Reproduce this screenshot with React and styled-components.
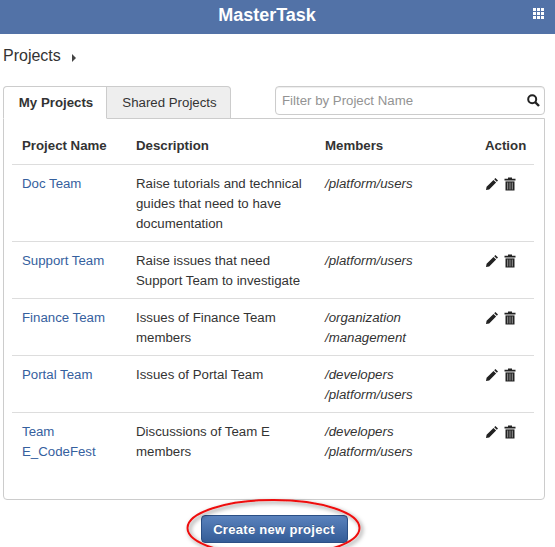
import React from "react";
import styled, { createGlobalStyle } from "styled-components";

const Global = createGlobalStyle`
  html, body { margin: 0; padding: 0; background: #fff; height: 547px; overflow: hidden; }
  * { box-sizing: border-box; }
  body { font-family: "Liberation Sans", Arial, sans-serif; font-size: 13.25px; color: #333; }
`;
const Header = styled.header`
  height: 34px; background: #5272a7; position: relative;
  display: flex; align-items: center; justify-content: center;
`;
const Title = styled.h1`
  margin: 0 21px 0 0; font-size: 18px; font-weight: 700; color: #fff; line-height: 30px; height: 34px; padding-top: 0;
`;
const GridIcon = styled.svg`
  position: absolute; right: 11px; top: 8px; width: 11px; height: 11px;
`;
const Crumb = styled.div`
  display: flex; align-items: center; height: 44px; padding: 0 0 0 3px; font-size: 16px; color: #333;
`;
const Caret = styled.span`
  width: 0; height: 0; margin: 3px 0 0 11px;
  border-left: 4px solid #444; border-top: 4px solid transparent; border-bottom: 4px solid transparent;
`;
const TopRow = styled.div`
  display: flex; justify-content: space-between; align-items: flex-start;
  margin: 8px 10px 0 3px; height: 32px;
`;
const Tabs = styled.div`
  display: flex; height: 33px; position: relative; z-index: 1;
`;
const Tab = styled.div`
  height: 33px; display: flex; align-items: center; justify-content: center; font-size: 13.25px;
  padding: 0 0 1px 2px;
  width: ${p => p.$w}px;
  border: 1px solid #ccc; border-radius: ${p => p.$first ? "4px 0 0 0" : "0 4px 0 0"};
  background: ${p => p.$active ? "#fff" : "#eee"};
  font-weight: ${p => p.$active ? 700 : 400};
  border-left-width: ${p => p.$first ? 1 : 0}px;
  border-bottom-color: ${p => p.$active ? "#fff" : "#ccc"};
`;
const Filter = styled.div`
  width: 270px; height: 29px; border: 1px solid #ccc; border-radius: 4px; background: #fff;
  display: flex; align-items: center; justify-content: space-between; padding: 0 4px 1px 6px;
  color: #939393; font-size: 13.25px; box-shadow: inset 0 1px 1px rgba(0,0,0,.075);
`;
const Panel = styled.div`
  margin: 0 10px 0 3px; height: 382px; border: 1px solid #ccc; border-radius: 0 0 4px 4px; padding: 11px 10px 0 8px;
`;
const Table = styled.div`display: flex; flex-direction: column;`;
const Row = styled.div`
  display: grid; grid-template-columns: 114px 189px 160px 1fr;
  border-top: ${p => p.$head ? "none" : "1px solid #ddd"};
  padding: ${p => p.$head ? "0 10px" : "9px 10px 0"};
  height: ${p => p.$h}px;
  line-height: 20px;
  align-items: ${p => p.$head ? "center" : "start"};
`;
const HeadCell = styled.div`
  font-weight: 700; color: #333; padding-bottom: 2px;
`;
const NameLink = styled.a`color: #35609e; text-decoration: none;`;
const Desc = styled.div`color: #333; white-space: nowrap;`;
const Members = styled.div`font-style: italic; color: #333;`;
const Actions = styled.div`display: flex; gap: 5px; padding: 3px 0 0 0;`;
const Footer = styled.div`display: flex; justify-content: center; padding-top: 15px; padding-right: 7px; position: relative;`;
const Button = styled.button`
  width: 147px; height: 28px; border: 1px solid #2b4f85; border-radius: 4px; color: #fff;
  background: linear-gradient(#5a82bd, #345c97);
  font: 700 13px "Liberation Sans", Arial, sans-serif; letter-spacing: .3px;
  text-shadow: 0 -1px 0 rgba(0,0,0,.2);
`;
const Ring = styled.svg`
  position: absolute; left: 180px; top: -5px; width: 190px; height: 70px; overflow: visible; pointer-events: none;
`;

const Pencil = () => (
  <svg width="14" height="14" viewBox="0 0 14 14">
    <path fill="#222" d="M10.4 1 L13 3.6 L11.8 4.8 L9.2 2.2 Z M8.5 2.9 L11.1 5.5 L4.2 12.4 L1 13 L1.6 9.8 Z" />
  </svg>
);
const Trash = () => (
  <svg width="12" height="14" viewBox="0 0 12 14">
    <path fill="#222" d="M4 0.5 H8 V1.8 H11.5 V3.6 H0.5 V1.8 H4 Z" />
    <path fill="#222" d="M1.5 4.4 H10.5 V13.5 H1.5 Z" />
    <path stroke="#999" strokeWidth="1" d="M3.7 5.5 V12.5 M6 5.5 V12.5 M8.3 5.5 V12.5" />
  </svg>
);

const rows = [
  { n: ["Doc Team"], d: ["Raise tutorials and technical", "guides that need to have", "documentation"], m: ["/platform/users"], h: 77 },
  { n: ["Support Team"], d: ["Raise issues that need", "Support Team to investigate"], m: ["/platform/users"], h: 57 },
  { n: ["Finance Team"], d: ["Issues of Finance Team", "members"], m: ["/organization", "/management"], h: 57 },
  { n: ["Portal Team"], d: ["Issues of Portal Team"], m: ["/developers", "/platform/users"], h: 57 },
  { n: ["Team", "E_CodeFest"], d: ["Discussions of Team E", "members"], m: ["/developers", "/platform/users"], h: 57 },
];
const lines = a => a.map((t, i) => <React.Fragment key={i}>{i > 0 && <br />}{t}</React.Fragment>);

export default function App() {
  return (
    <>
      <Global />
      <Header>
        <Title>MasterTask</Title>
        <GridIcon viewBox="0 0 11 11">
          <path fill="#fff" d="M0 0h3v3H0zM4 0h3v3H4zM8 0h3v3H8zM0 4h3v3H0zM4 4h3v3H4zM8 4h3v3H8zM0 8h3v3H0zM4 8h3v3H4zM8 8h3v3H8z" />
        </GridIcon>
      </Header>
      <Crumb>Projects<Caret /></Crumb>
      <TopRow>
        <Tabs>
          <Tab $first $active $w={104}>My Projects</Tab>
          <Tab $w={124}>Shared Projects</Tab>
        </Tabs>
        <Filter>
          Filter by Project Name
          <svg width="13" height="13" viewBox="0 0 13 13">
            <circle cx="5.2" cy="5.2" r="4" fill="none" stroke="#222" strokeWidth="2" />
            <path d="M8 8 L12 12" stroke="#222" strokeWidth="2.4" />
          </svg>
        </Filter>
      </TopRow>
      <Panel>
        <Table>
          <Row $head $h={34}>
            <HeadCell>Project Name</HeadCell>
            <HeadCell>Description</HeadCell>
            <HeadCell>Members</HeadCell>
            <HeadCell>Action</HeadCell>
          </Row>
          {rows.map(r => (
            <Row key={r.n.join()} $h={r.h}>
              <NameLink href="#">{lines(r.n)}</NameLink>
              <Desc>{lines(r.d)}</Desc>
              <Members>{lines(r.m)}</Members>
              <Actions><Pencil /><Trash /></Actions>
            </Row>
          ))}
        </Table>
      </Panel>
      <Footer>
        <Button>Create new project</Button>
        <Ring viewBox="0 0 190 70">
          <defs>
            <filter id="sh" x="-20%" y="-20%" width="140%" height="140%">
              <feDropShadow dx="2" dy="2" stdDeviation="2" floodColor="#000" floodOpacity=".5" />
            </filter>
          </defs>
          <ellipse cx="93.5" cy="33" rx="86" ry="28" fill="none" stroke="#ee1111" strokeWidth="2" filter="url(#sh)" />
        </Ring>
      </Footer>
    </>
  );
}
